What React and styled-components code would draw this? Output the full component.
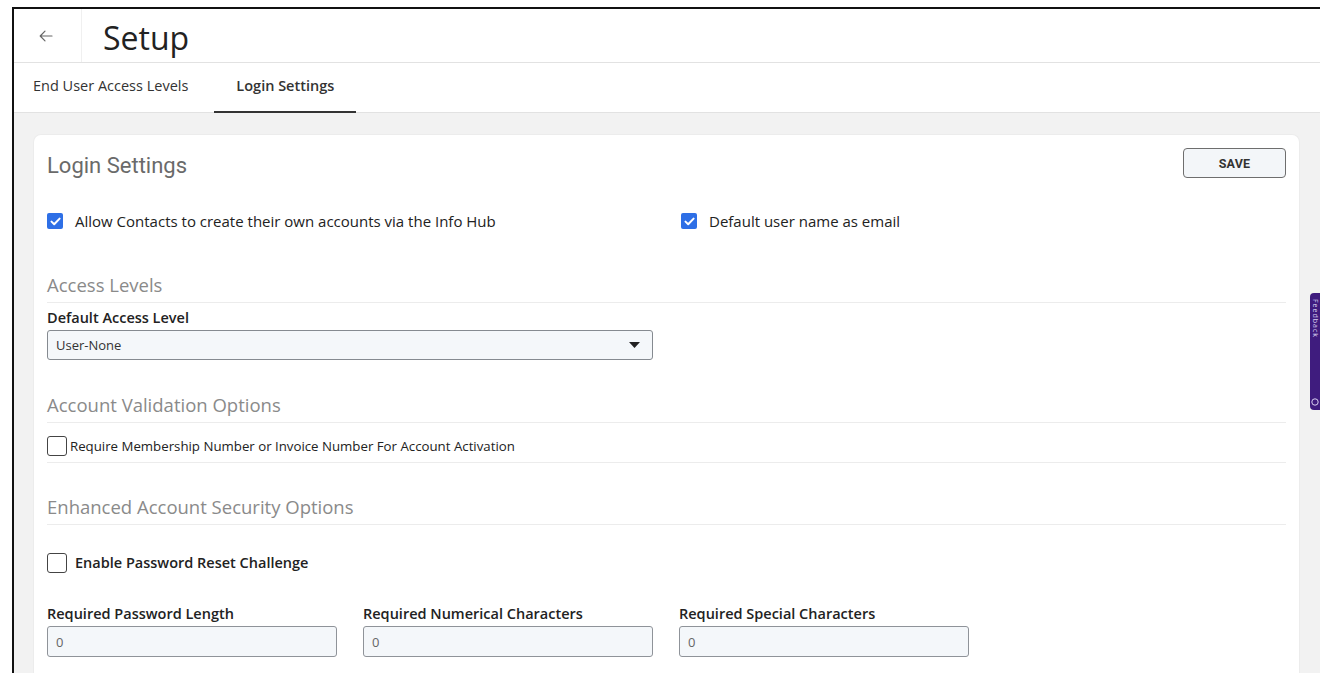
import React from "react";
import styled, { createGlobalStyle } from "styled-components";

const GlobalStyle = createGlobalStyle`
  html, body { margin: 0; padding: 0; background: #ffffff; }
  body { font-family: "Open Sans", "Liberation Sans", sans-serif; color: #222; overflow: hidden; }
  * { box-sizing: border-box; }
`;

const Frame = styled.div`
  margin: 7px 0 0 12px;
  height: calc(100vh - 7px);
  border-top: 2px solid #111;
  border-left: 2px solid #111;
  display: flex;
  flex-direction: column;
  position: relative;
  overflow: hidden;
`;

const Header = styled.header`
  flex-shrink: 0;
  display: flex;
  align-items: stretch;
  height: 54px;
  border-bottom: 1px solid #e2e2e2;
  background: #fff;
`;

const BackButton = styled.button`
  width: 68px;
  border: none;
  border-right: 1px solid #f0f0f0;
  background: transparent;
  display: flex;
  align-items: center;
  justify-content: center;
  padding: 0 4px 0 0;
  cursor: pointer;
`;

const Title = styled.h1`
  margin: 0 0 0 21px;
  padding-top: 4px;
  font-size: 32px;
  font-weight: 400;
  color: #222;
  line-height: 50px;
`;

const TabBar = styled.nav`
  flex-shrink: 0;
  display: flex;
  height: 50px;
  border-bottom: 1px solid #e2e2e2;
  background: #fff;
`;

const Tab = styled.div`
  display: flex;
  align-items: center;
  padding: 0 22px 4px;
  font-size: 14.5px;
  font-weight: ${(p) => (p.$active ? 600 : 400)};
  color: #333;
  border-bottom: 2px solid ${(p) => (p.$active ? "#333" : "transparent")};
  margin-bottom: -1px;
  &:first-child { padding-left: 19px; padding-right: 26px; }
`;

const Body = styled.main`
  flex: 1;
  background: #f2f2f2;
  padding: 21px 20px 0 19px;
`;

const Card = styled.section`
  background: #fff;
  border-radius: 8px;
  border: 1px solid #ececec;
  border-bottom: none;
  padding: 13px 13px 40px 13px;
  min-height: 600px;
`;

const CardHeader = styled.div`
  display: flex;
  align-items: center;
  justify-content: space-between;
  height: 30px;
`;

const CardTitle = styled.h2`
  margin: 4px 0 0;
  font-family: Roboto, "Liberation Sans", sans-serif;
  font-size: 22px;
  font-weight: 400;
  color: #6a6a6a;
`;

const SaveButton = styled.button`
  width: 103px;
  height: 30px;
  border: 1px solid #6e6e6e;
  border-radius: 4px;
  background: #f3f6f9;
  font-family: Roboto, "Liberation Sans", sans-serif;
  font-size: 12.5px;
  font-weight: 700;
  color: #333;
  letter-spacing: 0.2px;
`;

const TwoCols = styled.div`
  display: grid;
  grid-template-columns: 1fr 1fr;
  column-gap: 29px;
  margin-top: 33px;
`;

const CheckLabel = styled.label`
  display: flex;
  align-items: center;
  gap: ${(p) => p.$gap || 12}px;
  font-size: ${(p) => p.$size || 15}px;
  font-weight: ${(p) => p.$weight || 400};
  color: #222;
  line-height: 20px;
`;

const CheckedBox = styled.span`
  width: 16px;
  height: 16px;
  border-radius: 2px;
  background: #2e6fe6;
  display: inline-flex;
  align-items: center;
  justify-content: center;
  flex-shrink: 0;
`;

const EmptyBox = styled.span`
  width: 20px;
  height: 20px;
  border: 1px solid #444;
  border-radius: 3px;
  background: #fff;
  flex-shrink: 0;
`;

const SectionHeading = styled.h3`
  margin: ${(p) => p.$top}px 0 0;
  padding-bottom: ${(p) => p.$pad || 5}px;
  border-bottom: 1px solid #ececec;
  font-size: 18.5px;
  font-weight: 400;
  line-height: 24px;
  color: #8a8a8a;
`;

const FieldLabel = styled.div`
  margin-top: ${(p) => p.$top || 0}px;
  font-size: 14.5px;
  font-weight: 600;
  line-height: 18px;
  color: #222;
`;

const Select = styled.div`
  margin-top: 3px;
  width: 606px;
  height: 30px;
  border: 1px solid #858a90;
  border-radius: 3px;
  background: #f4f7fa;
  display: flex;
  align-items: center;
  justify-content: space-between;
  padding: 0 12px 0 8px;
  font-size: 13px;
  color: #333;
`;

const CheckRow = styled.div`
  margin-top: ${(p) => p.$top}px;
  padding-bottom: ${(p) => p.$pad || 0}px;
  border-bottom: ${(p) => (p.$divider ? "1px solid #ececec" : "none")};
`;

const FieldGrid = styled.div`
  display: grid;
  grid-template-columns: repeat(3, 290px);
  column-gap: 26px;
  margin-top: 32px;
`;

const Field = styled.div`
  display: flex;
  flex-direction: column;
`;

const NumberInput = styled.div`
  margin-top: 3px;
  height: 31px;
  border: 1px solid #8f9399;
  border-radius: 3px;
  background: #f4f7fa;
  display: flex;
  align-items: center;
  padding-left: 8px;
  font-size: 13px;
  color: #666;
`;

const FeedbackTab = styled.div`
  position: absolute;
  right: 0;
  top: 284px;
  width: 10px;
  height: 117px;
  background: #3f1c7e;
  border-radius: 4px 0 0 4px;
  display: flex;
  flex-direction: column;
  align-items: center;
  justify-content: space-between;
  padding: 6px 0 4px;
`;

const FeedbackText = styled.span`
  writing-mode: vertical-rl;
  font-size: 7px;
  line-height: 8px;
  color: #d9cff0;
  letter-spacing: 1px;
`;

const Check = () => (
  <svg width="11" height="9" viewBox="0 0 11 9" aria-hidden="true">
    <path d="M1.5 4.6 L4.2 7.2 L9.6 1.6" fill="none" stroke="#fff" strokeWidth="2" strokeLinecap="round" strokeLinejoin="round" />
  </svg>
);

const Caret = () => (
  <svg width="11" height="6" viewBox="0 0 11 6" aria-hidden="true">
    <path d="M0 0 H11 L5.5 6 Z" fill="#222" />
  </svg>
);

const ArrowLeft = () => (
  <svg width="14" height="12" viewBox="0 0 14 12" aria-hidden="true">
    <path d="M13 6 H1.5 M6 1.2 L1.2 6 L6 10.8" fill="none" stroke="#666" strokeWidth="1.2" strokeLinecap="round" strokeLinejoin="round" />
  </svg>
);

export default function App() {
  return (
    <>
      <GlobalStyle />
      <Frame>
        <Header>
          <BackButton aria-label="Back">
            <ArrowLeft />
          </BackButton>
          <Title>Setup</Title>
        </Header>
        <TabBar>
          <Tab>End User Access Levels</Tab>
          <Tab $active>Login Settings</Tab>
        </TabBar>
        <Body>
          <Card>
            <CardHeader>
              <CardTitle>Login Settings</CardTitle>
              <SaveButton>SAVE</SaveButton>
            </CardHeader>

            <TwoCols>
              <CheckLabel>
                <CheckedBox><Check /></CheckedBox>
                Allow Contacts to create their own accounts via the Info Hub
              </CheckLabel>
              <CheckLabel>
                <CheckedBox><Check /></CheckedBox>
                Default user name as email
              </CheckLabel>
            </TwoCols>

            <SectionHeading $top={42}>Access Levels</SectionHeading>
            <FieldLabel $top={6}>Default Access Level</FieldLabel>
            <Select>
              <span>User-None</span>
              <Caret />
            </Select>

            <SectionHeading $top={33}>Account Validation Options</SectionHeading>
            <CheckRow $top={13} $pad={6} $divider>
              <CheckLabel $gap={3} $size={13.25}>
                <EmptyBox />
                Require Membership Number or Invoice Number For Account Activation
              </CheckLabel>
            </CheckRow>

            <SectionHeading $top={32} $pad={5}>Enhanced Account Security Options</SectionHeading>
            <CheckRow $top={28}>
              <CheckLabel $gap={8} $size={14.5} $weight={600}>
                <EmptyBox />
                Enable Password Reset Challenge
              </CheckLabel>
            </CheckRow>

            <FieldGrid>
              <Field>
                <FieldLabel>Required Password Length</FieldLabel>
                <NumberInput>0</NumberInput>
              </Field>
              <Field>
                <FieldLabel>Required Numerical Characters</FieldLabel>
                <NumberInput>0</NumberInput>
              </Field>
              <Field>
                <FieldLabel>Required Special Characters</FieldLabel>
                <NumberInput>0</NumberInput>
              </Field>
            </FieldGrid>
          </Card>
        </Body>
        <FeedbackTab>
          <FeedbackText>Feedback</FeedbackText>
          <svg width="8" height="8" viewBox="0 0 8 8" aria-hidden="true">
            <circle cx="4" cy="4" r="3.2" fill="none" stroke="#d9cff0" strokeWidth="1" />
          </svg>
        </FeedbackTab>
      </Frame>
    </>
  );
}
